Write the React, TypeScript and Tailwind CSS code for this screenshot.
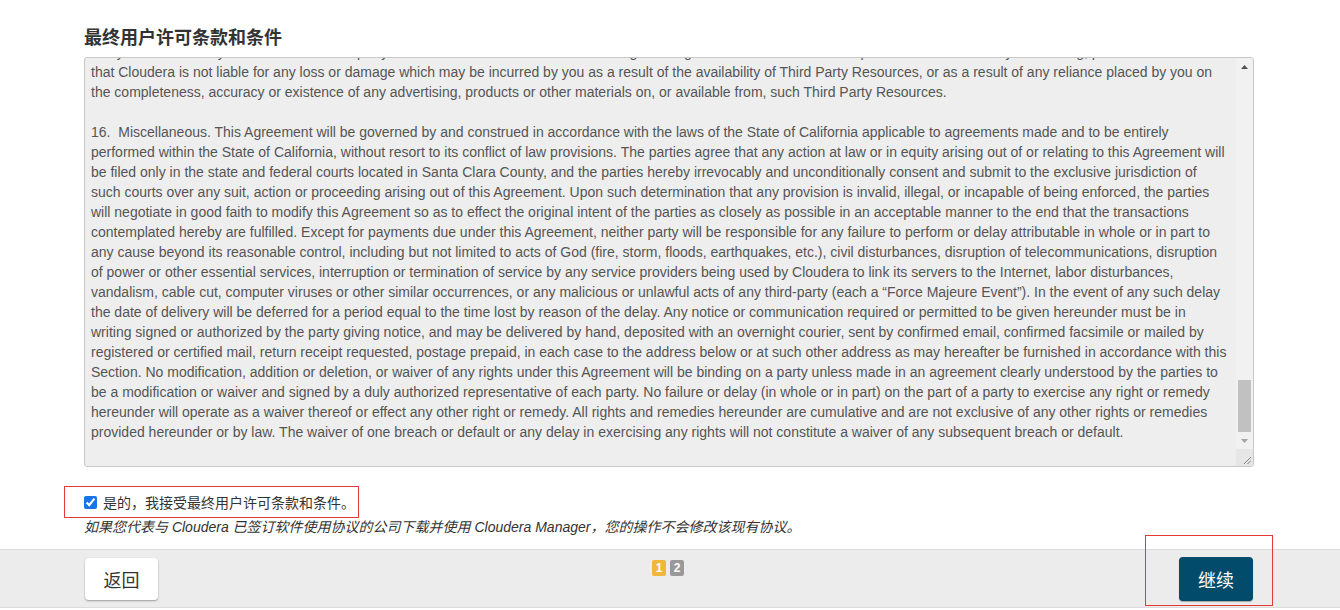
import React from "react";

const LINES: string[] = [
  "that Cloudera is not liable for any loss or damage which may be incurred by you as a result of the availability of Third Party Resources, or as a result of any reliance placed by you on",
  "the completeness, accuracy or existence of any advertising, products or other materials on, or available from, such Third Party Resources.",
  "",
  "16.  Miscellaneous. This Agreement will be governed by and construed in accordance with the laws of the State of California applicable to agreements made and to be entirely",
  "performed within the State of California, without resort to its conflict of law provisions. The parties agree that any action at law or in equity arising out of or relating to this Agreement will",
  "be filed only in the state and federal courts located in Santa Clara County, and the parties hereby irrevocably and unconditionally consent and submit to the exclusive jurisdiction of",
  "such courts over any suit, action or proceeding arising out of this Agreement. Upon such determination that any provision is invalid, illegal, or incapable of being enforced, the parties",
  "will negotiate in good faith to modify this Agreement so as to effect the original intent of the parties as closely as possible in an acceptable manner to the end that the transactions",
  "contemplated hereby are fulfilled. Except for payments due under this Agreement, neither party will be responsible for any failure to perform or delay attributable in whole or in part to",
  "any cause beyond its reasonable control, including but not limited to acts of God (fire, storm, floods, earthquakes, etc.), civil disturbances, disruption of telecommunications, disruption",
  "of power or other essential services, interruption or termination of service by any service providers being used by Cloudera to link its servers to the Internet, labor disturbances,",
  "vandalism, cable cut, computer viruses or other similar occurrences, or any malicious or unlawful acts of any third-party (each a \u201cForce Majeure Event\u201d). In the event of any such delay",
  "the date of delivery will be deferred for a period equal to the time lost by reason of the delay. Any notice or communication required or permitted to be given hereunder must be in",
  "writing signed or authorized by the party giving notice, and may be delivered by hand, deposited with an overnight courier, sent by confirmed email, confirmed facsimile or mailed by",
  "registered or certified mail, return receipt requested, postage prepaid, in each case to the address below or at such other address as may hereafter be furnished in accordance with this",
  "Section. No modification, addition or deletion, or waiver of any rights under this Agreement will be binding on a party unless made in an agreement clearly understood by the parties to",
  "be a modification or waiver and signed by a duly authorized representative of each party. No failure or delay (in whole or in part) on the part of a party to exercise any right or remedy",
  "hereunder will operate as a waiver thereof or effect any other right or remedy. All rights and remedies hereunder are cumulative and are not exclusive of any other rights or remedies",
  "provided hereunder or by law. The waiver of one breach or default or any delay in exercising any rights will not constitute a waiver of any subsequent breach or default.",
];

const FONT = "font-['Liberation_Sans','Noto_Sans_CJK_SC',sans-serif]";

export default function App() {
  return (
    <div className={`w-[1340px] h-[610px] bg-white overflow-hidden flex flex-col ${FONT} text-[#333]`}>
      <div className="flex-1 flex flex-col ml-[84px] w-[1170px]">
        <h2 className="mt-[24px] text-[18px] leading-[24px] font-bold text-[#333] font-['Noto_Sans_CJK_SC',sans-serif]">
          最终用户许可条款和条件
        </h2>
        <div className="mt-[9px] h-[410px] border border-[#c8c8c8] rounded-[3px] bg-[#eeeeee] flex overflow-hidden">
          <div className="flex-1 overflow-hidden pl-[6px]">
            <div className="-mt-[15px] text-[14px] leading-[20px] text-[#555]">
              <div className="whitespace-pre h-[19px] leading-[18px] overflow-hidden">
                Party Resources may contain links to third-party websites or resources. You acknowledge and agree that Cloudera is not responsible or liable for any advertising, products or other materials, and
              </div>
              {LINES.map((l, i) => (
                <div key={i} className="whitespace-pre h-[20px]">
                  {l}
                </div>
              ))}
            </div>
          </div>
          <div className="w-[17px] flex flex-col bg-[#f1f1f1]">
            <div className="h-[17px] flex items-center justify-center">
              <svg width="7" height="4" viewBox="0 0 7 4">
                <polygon points="0,4 7,4 3.5,0" fill="#505050" />
              </svg>
            </div>
            <div className="flex-1 flex flex-col justify-end px-[2px]">
              <div className="h-[52px] bg-[#c1c1c1]" />
            </div>
            <div className="h-[17px] flex items-center justify-center">
              <svg width="7" height="4" viewBox="0 0 7 4">
                <polygon points="0,0 7,0 3.5,4" fill="#a3a3a3" />
              </svg>
            </div>
            <div className="h-[17px] bg-[#e6e6e6] flex items-end justify-end p-[2px]">
              <svg width="8" height="8" viewBox="0 0 8 8">
                <line x1="1" y1="8" x2="8" y2="1" stroke="#777" strokeWidth="0.9" />
                <line x1="4.5" y1="8" x2="8" y2="4.5" stroke="#777" strokeWidth="0.9" />
              </svg>
            </div>
          </div>
        </div>
        <div className="mt-[19px] -ml-[20px] w-[295px] h-[32px] border border-[#e53935] flex items-center pl-[19px] gap-[6px]">
          <input type="checkbox" defaultChecked className="w-[13px] h-[13px] m-0 accent-[#1a73e8]" />
          <span className="text-[14px] text-[#333] font-['Noto_Sans_CJK_SC',sans-serif]">是的，我接受最终用户许可条款和条件。</span>
        </div>
        <p className="mt-[0px] text-[14px] leading-[18px] italic text-[#333]">
          如果您代表与 Cloudera 已签订软件使用协议的公司下载并使用 Cloudera Manager，您的操作不会修改该现有协议。
        </p>
      </div>
      <div className="h-[59px] mb-[2px] bg-[#ececec] border-t border-b border-[#dcdcdc] flex items-start justify-between pl-[85px] pr-[67px]">
        <button className="mt-[8px] w-[73px] h-[42px] bg-white rounded-[4px] shadow-[0_1px_2px_rgba(0,0,0,0.35)] text-[18px] text-[#333] font-['Noto_Sans_CJK_SC',sans-serif]">
          返回
        </button>
        <div className="mt-[10px] flex gap-[4px] ml-[33px]">
          <span className="w-[14px] h-[16px] rounded-[2px] bg-[#f0b73a] text-white text-[12px] font-bold leading-[16px] text-center">1</span>
          <span className="w-[14px] h-[16px] rounded-[2px] bg-[#999] text-white text-[12px] font-bold leading-[16px] text-center">2</span>
        </div>
        <div className="-mt-[15px] w-[128px] h-[71px] border border-[#e53935] flex justify-end pr-[19px] pt-[21px]">
          <button className="w-[74px] h-[44px] bg-[#034b6b] rounded-[4px] text-white text-[18px] font-['Noto_Sans_CJK_SC',sans-serif] shadow-[0_1px_1px_rgba(0,0,0,0.3)]">
            继续
          </button>
        </div>
      </div>
    </div>
  );
}
